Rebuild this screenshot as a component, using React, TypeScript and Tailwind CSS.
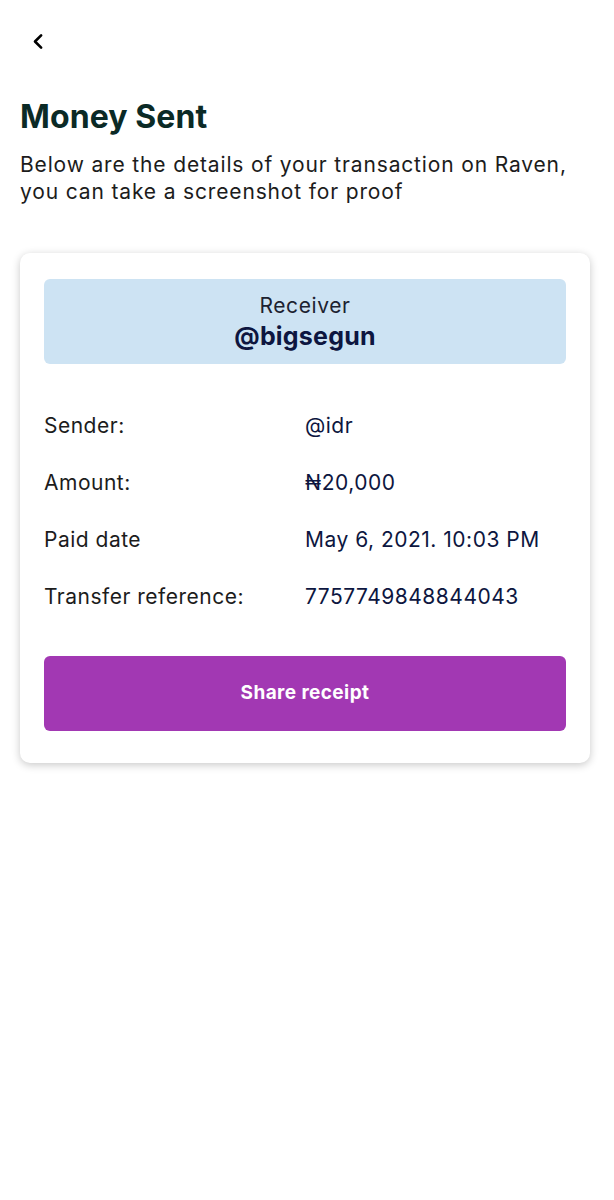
import React from 'react';

const rows = [
  { label: 'Sender:', value: '@idr' },
  { label: 'Amount:', value: '₦20,000' },
  { label: 'Paid date', value: 'May 6, 2021. 10:03 PM' },
  { label: 'Transfer reference:', value: '7757749848844043' },
];

const App: React.FC = () => {
  return (
    <div
      className="min-h-screen w-[614px] bg-white"
      style={{ fontFamily: 'Inter, "Noto Sans", sans-serif' }}
    >
      <div className="pl-5 pr-6 pt-[29px]">
        <button className="ml-[6px] flex h-6 w-6 items-center justify-center text-black">
          <svg width="21" height="21" viewBox="0 0 24 24" fill="none" stroke="currentColor" strokeWidth="3" strokeLinecap="round" strokeLinejoin="round">
            <path d="M15 5l-7 7 7 7" />
          </svg>
        </button>

        <h1 className="mt-[45px] text-[32px] font-bold leading-[38px] tracking-[0.1px] text-[#0b2a26]">
          Money Sent
        </h1>
        <p className="mt-[15px] max-w-[560px] text-[21px] leading-[27px] tracking-[0.85px] text-[#1c1c1c]">
          Below are the details of your transaction on Raven, you can take a screenshot for proof
        </p>

        <div className="mt-[48px] rounded-[10px] bg-white px-6 pt-[26px] pb-[32px] shadow-[0_2px_8px_rgba(0,0,0,0.22)]">
          <div className="flex h-[85px] flex-col items-center justify-center rounded-[6px] bg-[#cde3f3]">
            <div className="text-[21px] leading-[26px] tracking-[0.6px] text-[#1c2230]">Receiver</div>
            <div className="mt-[2px] text-[25px] font-bold leading-[30px] tracking-[0.2px] text-[#0d1640]">@bigsegun</div>
          </div>

          <div className="mt-[49px] flex flex-col gap-[31px]">
            {rows.map((r) => (
              <div key={r.label} className="flex items-center text-[21px] leading-[26px] tracking-[0.5px]">
                <span className="w-[261px] text-[#1c1c1c]">{r.label}</span>
                <span className="text-[#0d1640]">{r.value}</span>
              </div>
            ))}
          </div>

          <button className="mt-[46px] flex h-[75px] w-full items-center justify-center rounded-[6px] bg-[#a238b3] text-[19px] font-bold tracking-[0.4px] text-white">
            Share receipt
          </button>
        </div>
      </div>
    </div>
  );
};

export default App;
